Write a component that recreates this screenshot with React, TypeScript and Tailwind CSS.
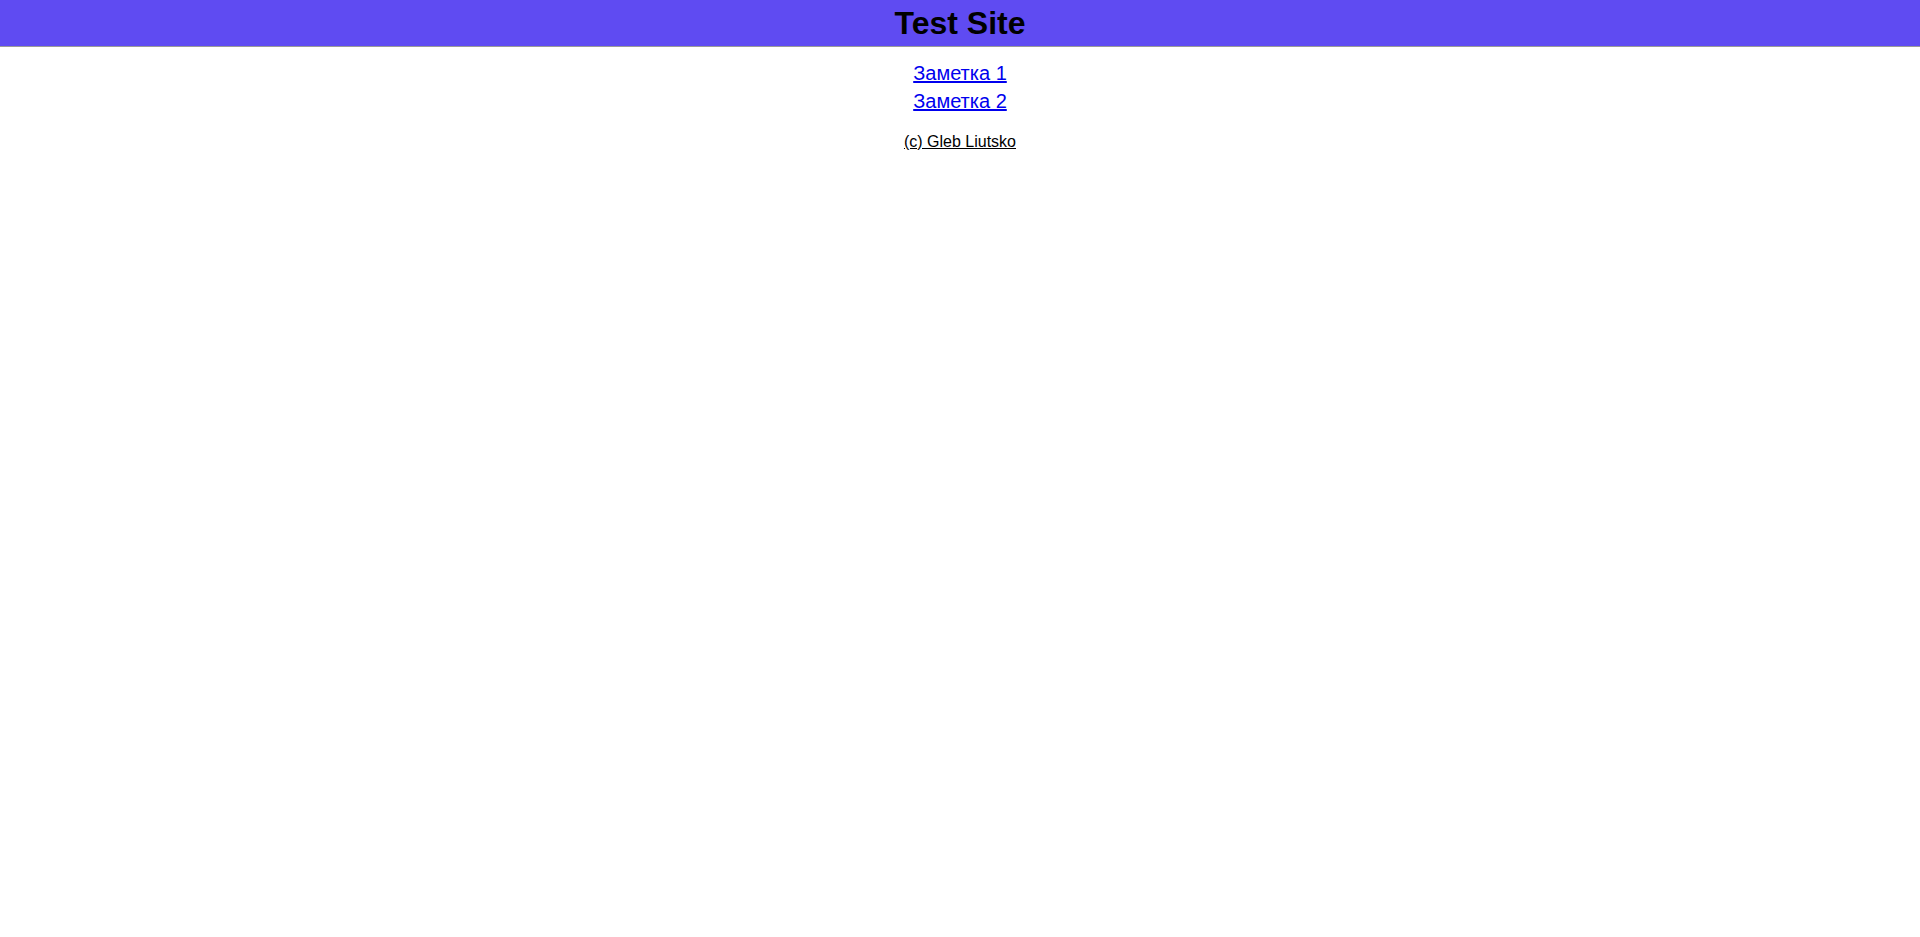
export default function App() {
  return (
    <div className="min-h-screen bg-white font-['Liberation_Sans',Arial,sans-serif] text-black">
      <header className="h-[47px] bg-[#5f4bf2] border-b border-[#9a9a9a] flex items-center justify-center">
        <h1 className="text-[32px] font-bold leading-none">Test Site</h1>
      </header>

      <main className="flex flex-col items-center pt-[12px]">
        <a href="#" className="text-[20px] leading-[28px] text-[#0000ee] underline">
          Заметка 1
        </a>
        <a href="#" className="text-[20px] leading-[28px] text-[#0000ee] underline">
          Заметка 2
        </a>
      </main>

      <footer className="flex justify-center pt-[18px]">
        <a href="#" className="text-[16px] leading-[18px] text-black underline">
          (c) Gleb Liutsko
        </a>
      </footer>
    </div>
  );
}
